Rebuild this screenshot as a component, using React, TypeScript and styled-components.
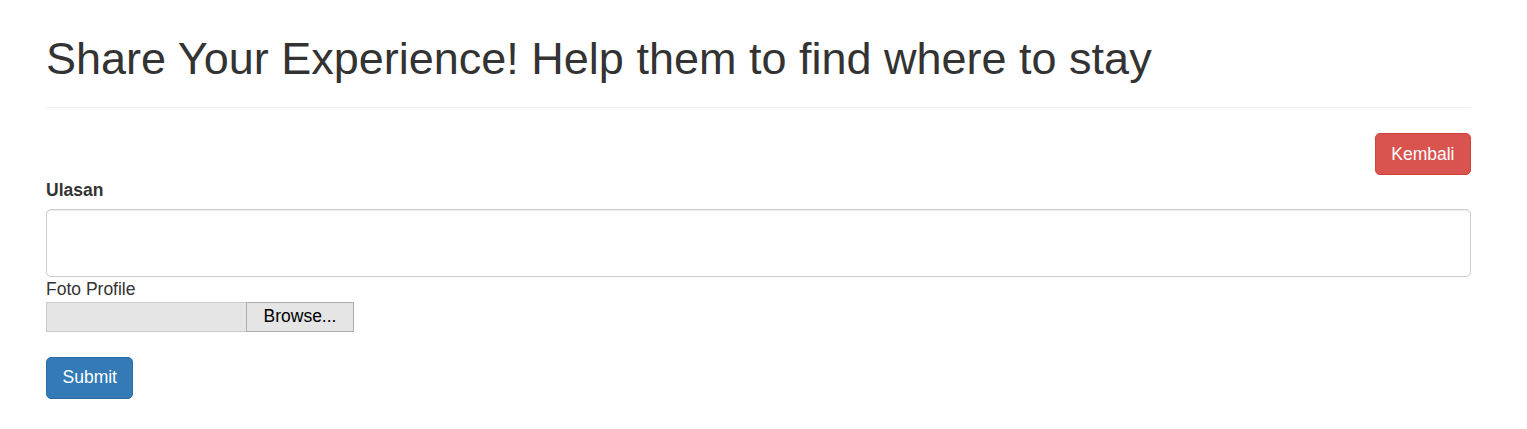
import React from "react";
import styled, { createGlobalStyle } from "styled-components";

const Global = createGlobalStyle`
  html, body {
    margin: 0;
    padding: 0;
    background: #fff;
  }
  body {
    font-family: "Liberation Sans", Arial, Helvetica, sans-serif;
    font-size: 17.5px;
    line-height: 1.42857;
    color: #333;
  }
  * { box-sizing: border-box; }
`;

const Container = styled.div`
  width: 1471px;
  padding-left: 46px;
`;

const PageHeader = styled.div`
  margin-top: 34px;
  padding-bottom: 11px;
  border-bottom: 1px solid #eee;
  margin-bottom: 25px;
`;

const Title = styled.h1`
  margin: 0 0 12.5px;
  font-size: 45px;
  font-weight: 500;
  line-height: 1.1;
  color: #333;
`;

const ButtonRow = styled.div`
  display: flex;
  justify-content: flex-end;
`;

const Btn = styled.button<{ $variant: "danger" | "primary" }>`
  display: inline-block;
  font-family: inherit;
  font-size: 17.5px;
  line-height: 1.42857;
  padding: 7.5px 15.5px;
  border-radius: 5px;
  color: #fff;
  cursor: pointer;
  border: 1px solid ${(p) => (p.$variant === "danger" ? "#d43f3a" : "#2e6da4")};
  background: ${(p) => (p.$variant === "danger" ? "#d9534f" : "#337ab7")};
`;

const Form = styled.form`
  margin-top: 3px;
  display: flex;
  flex-direction: column;
  align-items: flex-start;
`;

const Label = styled.label<{ $bold?: boolean }>`
  display: block;
  font-weight: ${(p) => (p.$bold ? 700 : 400)};
  margin-bottom: ${(p) => (p.$bold ? "6px" : "0")};
`;

const TextArea = styled.textarea`
  display: block;
  width: 100%;
  height: 68px;
  padding: 7.5px 15px;
  font-family: inherit;
  font-size: 17.5px;
  color: #555;
  border: 1px solid #ccc;
  border-radius: 5px;
  box-shadow: inset 0 1px 1px rgba(0, 0, 0, 0.075);
  resize: none;
  margin: 0;
`;

const FilePicker = styled.label`
  display: flex;
  height: 30px;
  cursor: pointer;
  margin-bottom: 25px;
`;

const HiddenInput = styled.input`
  display: none;
`;

const FileField = styled.span`
  width: 200px;
  height: 30px;
  background: #e5e5e5;
  border: 1px solid #cbcbcb;
  border-right: none;
`;

const FileButton = styled.span`
  width: 108px;
  height: 30px;
  display: flex;
  align-items: center;
  justify-content: center;
  background: #e5e5e5;
  border: 1px solid #adadad;
  color: #000;
  font-size: 17.5px;
`;

export default function App() {
  return (
    <>
      <Global />
      <Container>
        <PageHeader>
          <Title>Share Your Experience! Help them to find where to stay</Title>
        </PageHeader>
        <ButtonRow>
          <Btn $variant="danger" type="button">Kembali</Btn>
        </ButtonRow>
        <Form onSubmit={(e) => e.preventDefault()}>
          <Label $bold htmlFor="ulasan">Ulasan</Label>
          <TextArea id="ulasan" />
          <Label htmlFor="foto">Foto Profile</Label>
          <FilePicker>
            <HiddenInput id="foto" type="file" />
            <FileField />
            <FileButton>Browse...</FileButton>
          </FilePicker>
          <Btn $variant="primary" type="submit">Submit</Btn>
        </Form>
      </Container>
    </>
  );
}
